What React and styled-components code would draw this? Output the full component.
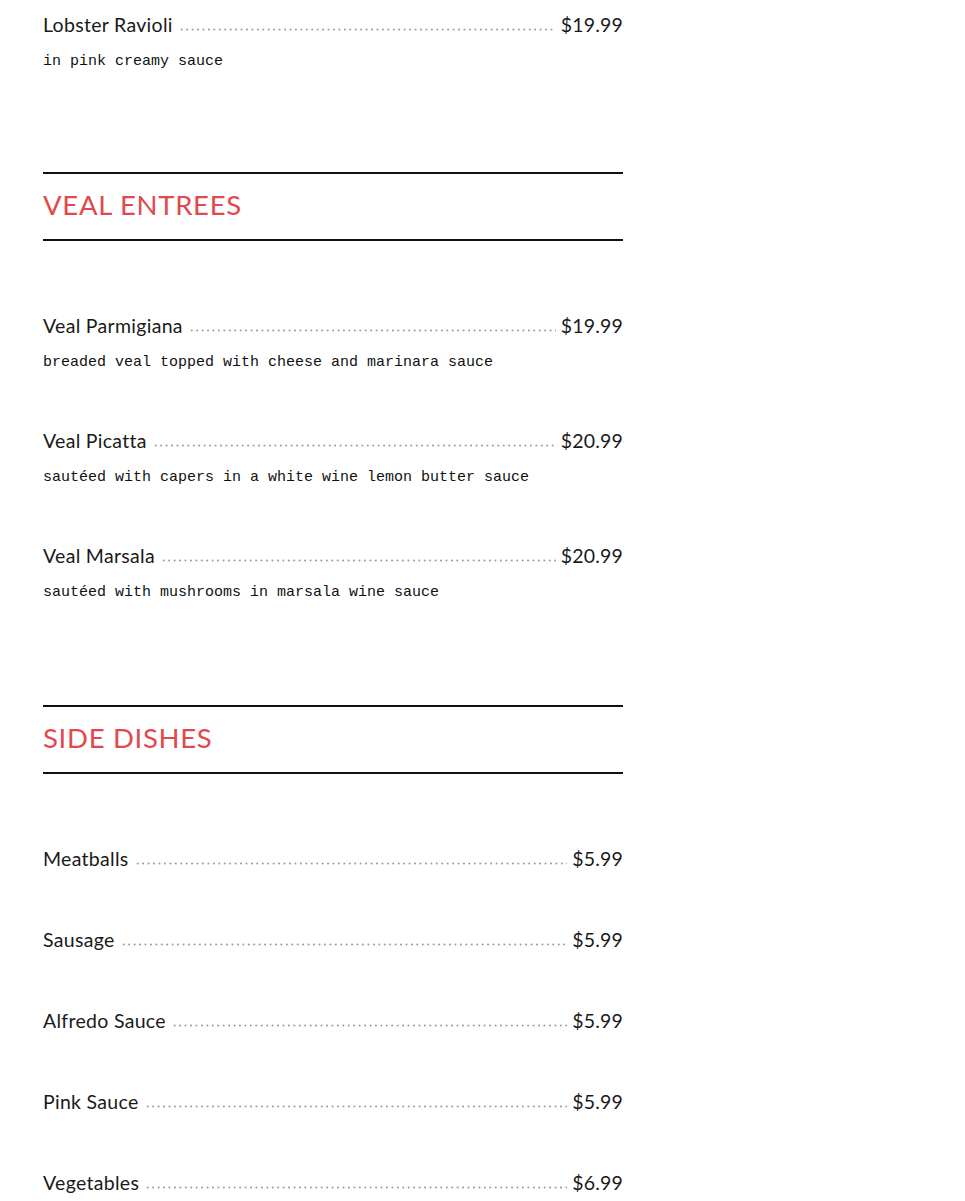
import React from 'react';
import styled, { createGlobalStyle } from 'styled-components';

const GlobalStyle = createGlobalStyle`
  html, body {
    margin: 0;
    padding: 0;
    background: #ffffff;
  }
`;

const Page = styled.div`
  width: 580px;
  padding: 13px 0 0 43px;
  color: #1a1a1a;
`;

const Section = styled.section`
  margin-top: ${props => props.spacing}px;
`;

const Heading = styled.h2`
  margin: 0 0 73px;
  height: 69px;
  padding-bottom: 5px;
  box-sizing: border-box;
  border-top: 2px solid #111;
  border-bottom: 2px solid #111;
  display: flex;
  align-items: center;
  font-family: 'Lato', sans-serif;
  font-weight: 400;
  font-size: 27.5px;
  letter-spacing: 0.7px;
  color: #e2494e;
  text-transform: uppercase;
`;

const Item = styled.div`
  padding-bottom: 57px;
`;

const NameRow = styled.div`
  display: flex;
  align-items: baseline;
  height: 24px;
  line-height: 24px;
`;

const Name = styled.span`
  font-family: 'Lato', sans-serif;
  font-size: 19.5px;
  letter-spacing: 0.3px;
  white-space: nowrap;
`;

const Leader = styled.span`
  flex: 1;
  align-self: stretch;
  margin: 0 5px 0 6px;
  background-image: radial-gradient(circle, #999 0.9px, transparent 1.2px);
  background-size: 5.45px 3px;
  background-repeat: repeat-x;
  background-position: 0 15px;
`;

const Price = styled.span`
  font-family: 'Lato', sans-serif;
  font-size: 19.5px;
  letter-spacing: 0.2px;
`;

const Desc = styled.div`
  margin: 15px 0 -1px;
  font-family: 'Liberation Mono', monospace;
  font-size: 15px;
  line-height: 20px;
  color: #111;
`;

const sections = [
  {
    title: null,
    spacing: 0,
    items: [{ name: 'Lobster Ravioli', price: '$19.99', desc: 'in pink creamy sauce' }],
  },
  {
    title: 'Veal Entrees',
    spacing: 44,
    items: [
      { name: 'Veal Parmigiana', price: '$19.99', desc: 'breaded veal topped with cheese and marinara sauce' },
      { name: 'Veal Picatta', price: '$20.99', desc: 'sautéed with capers in a white wine lemon butter sauce' },
      { name: 'Veal Marsala', price: '$20.99', desc: 'sautéed with mushrooms in marsala wine sauce' },
    ],
  },
  {
    title: 'Side Dishes',
    spacing: 46,
    items: [
      { name: 'Meatballs', price: '$5.99' },
      { name: 'Sausage', price: '$5.99' },
      { name: 'Alfredo Sauce', price: '$5.99' },
      { name: 'Pink Sauce', price: '$5.99' },
      { name: 'Vegetables', price: '$6.99' },
    ],
  },
];

export default function App() {
  return (
    <>
      <GlobalStyle />
      <Page>
        {sections.map((section, i) => (
          <Section key={i} spacing={section.spacing}>
            {section.title && <Heading>{section.title}</Heading>}
            {section.items.map(item => (
              <Item key={item.name}>
                <NameRow>
                  <Name>{item.name}</Name>
                  <Leader />
                  <Price>{item.price}</Price>
                </NameRow>
                {item.desc && <Desc>{item.desc}</Desc>}
              </Item>
            ))}
          </Section>
        ))}
      </Page>
    </>
  );
}
